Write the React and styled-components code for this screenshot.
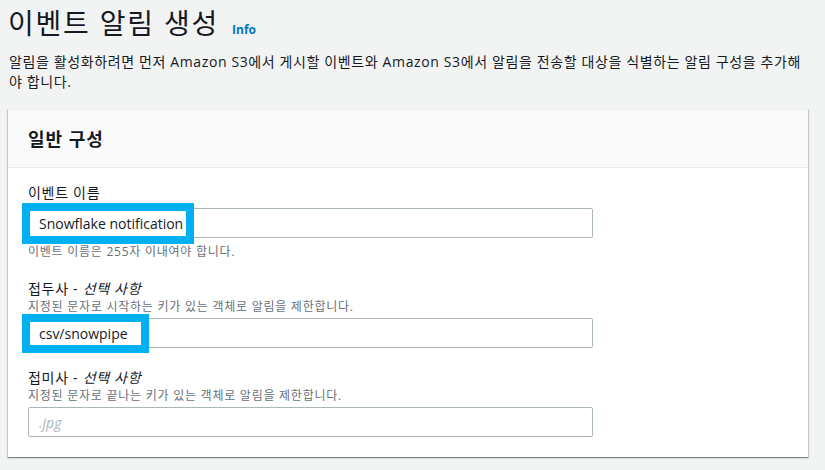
import React from "react";
import styled, { createGlobalStyle } from "styled-components";

const Global = createGlobalStyle`
  html, body { margin: 0; padding: 0; background: #f2f3f3; }
  body {
    font-family: "Open Sans", "Noto Sans CJK KR", sans-serif;
    color: #16191f;
    -webkit-font-smoothing: antialiased;
  }
`;

const Page = styled.div`
  width: 800px;
  padding: 0 17px 12px 8px;
`;

const TitleRow = styled.div`
  display: flex;
  align-items: baseline;
  gap: 13px;
  padding-top: 2px;
`;

const Title = styled.h1`
  margin: 0;
  font-size: 28px;
  font-weight: 400;
  line-height: 42px;
  color: #16191f;
  letter-spacing: 1.8px;
`;

const InfoLink = styled.a`
  font-size: 12px;
  font-weight: 700;
  color: #0073bb;
  text-decoration: none;
`;

const Intro = styled.p`
  margin: 8px 0 0;
  font-size: 14px;
  line-height: 20px;
  color: #16191f;
  padding-left: 1px;
  letter-spacing: 0.62px;
  word-break: break-all;
`;

const Card = styled.section`
  margin-top: 17px;
  background: #fff;
  box-shadow: 0 1px 1px 0 rgba(0, 28, 36, 0.3), 1px 1px 1px 0 rgba(0, 28, 36, 0.15),
    -1px 1px 1px 0 rgba(0, 28, 36, 0.15);
  border-top: 1px solid #eaeded;
`;

const CardHeader = styled.header`
  background: #fafafa;
  border-bottom: 1px solid #eaeded;
  height: 57px;
  padding: 0 20px;
  display: flex;
  align-items: center;
`;

const CardTitle = styled.h2`
  margin: 0;
  font-size: 18px;
  font-weight: 700;
  line-height: 22px;
  color: #16191f;
  letter-spacing: 1px;
`;

const CardBody = styled.div`
  padding: 16px 20px 20px;
  display: flex;
  flex-direction: column;
  gap: 20px;
`;

const Field = styled.div`
  display: flex;
  flex-direction: column;
  margin-top: ${(p) => p.$shift || 0}px;
`;

const Label = styled.label`
  font-size: 14px;
  line-height: 18px;
  color: #16191f;
  letter-spacing: 0.7px;
  margin-bottom: ${(p) => (p.$tight ? "1px" : "6px")};
  em { font-style: italic; }
`;

const Description = styled.div`
  font-size: 12px;
  line-height: 16px;
  color: #687078;
  letter-spacing: 0.75px;
  margin: ${(p) => (p.$after ? "6px 0 0" : "0 0 3px")};
`;

const InputWrap = styled.div`
  position: relative;
  width: 565px;
`;

const Input = styled.input`
  box-sizing: border-box;
  width: 100%;
  height: 30px;
  border: 1px solid #aab7b8;
  border-radius: 2px;
  background: #fff;
  padding: 0 10px;
  font-family: "Open Sans", "Noto Sans CJK KR", sans-serif;
  font-size: 14px;
  color: #16191f;
  outline: none;
  &::placeholder {
    color: #aab7b8;
    font-style: italic;
  }
`;

const Highlight = styled.div`
  position: absolute;
  left: -6px;
  top: ${(p) => p.$top}px;
  width: ${(p) => p.$w}px;
  height: ${(p) => p.$h}px;
  box-sizing: border-box;
  border: 8px solid #00b0f0;
  pointer-events: none;
`;

export default function App() {
  return (
    <>
      <Global />
      <Page>
        <TitleRow>
          <Title>이벤트 알림 생성</Title>
          <InfoLink href="#">Info</InfoLink>
        </TitleRow>
        <Intro>
          알림을 활성화하려면 먼저 Amazon S3에서 게시할 이벤트와 Amazon S3에서 알림을 전송할 대상을 식별하는 알림 구성을 추가해야 합니다.
        </Intro>
        <Card>
          <CardHeader>
            <CardTitle>일반 구성</CardTitle>
          </CardHeader>
          <CardBody>
            <Field>
              <Label>이벤트 이름</Label>
              <InputWrap>
                <Input defaultValue="Snowflake notification" />
                <Highlight $top={-5} $w={172} $h={41} />
              </InputWrap>
              <Description $after>이벤트 이름은 255자 이내여야 합니다.</Description>
            </Field>
            <Field>
              <Label $tight>
                접두사 - <em>선택 사항</em>
              </Label>
              <Description>지정된 문자로 시작하는 키가 있는 객체로 알림을 제한합니다.</Description>
              <InputWrap>
                <Input defaultValue="csv/snowpipe" />
                <Highlight $top={-4} $w={127} $h={39} />
              </InputWrap>
            </Field>
            <Field $shift={1}>
              <Label $tight>
                접미사 - <em>선택 사항</em>
              </Label>
              <Description>지정된 문자로 끝나는 키가 있는 객체로 알림을 제한합니다.</Description>
              <InputWrap>
                <Input placeholder=".jpg" />
              </InputWrap>
            </Field>
          </CardBody>
        </Card>
      </Page>
    </>
  );
}
